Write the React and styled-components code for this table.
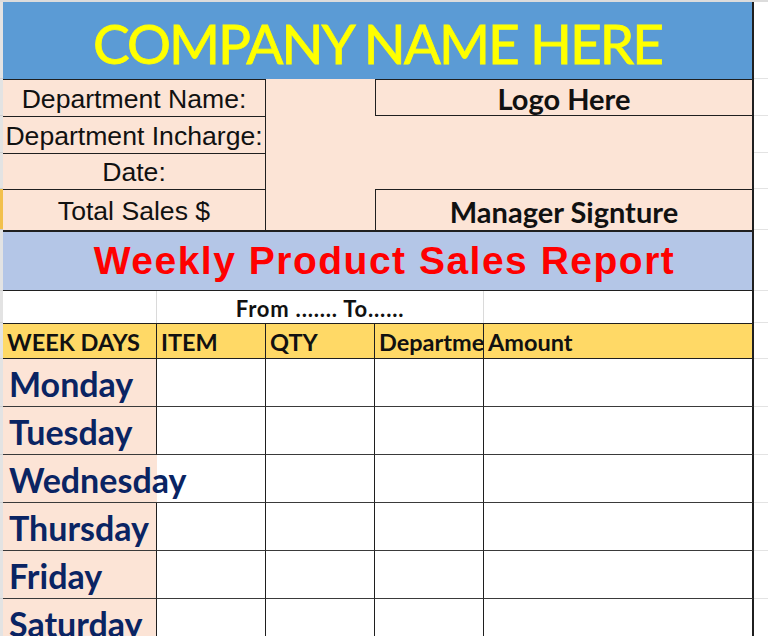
import React from "react";
import styled, { createGlobalStyle } from "styled-components";

const GlobalStyle = createGlobalStyle`
  html, body {
    margin: 0;
    padding: 0;
    background: #ffffff;
  }
  body {
    width: 768px;
    height: 636px;
    overflow: hidden;
  }
`;

const INK = "#1f1f1f";
const PINK = "#fce4d6";
const calibri = `Lato, "Open Sans", sans-serif`;
const arial = `"Liberation Sans", Arial, sans-serif`;

const Sheet = styled.div`
  display: grid;
  grid-template-columns: 3px 154px 109px 109px 109px 270px 14px;
  grid-template-rows: 2px 77px 37px 37px 36px 41px 61px 32px 36px repeat(6, 48px);
  width: 768px;
  height: 636px;
  overflow: hidden;
  background: #ffffff;
`;

const ColumnStrip = styled.div`
  grid-column: 1 / -1;
  grid-row: 1;
  background: #dcdcdc;
`;

const RowHead = styled.div`
  grid-column: 1;
  grid-row: ${(p) => p.$row};
  background: ${(p) => (p.$active ? "#f2c04c" : "#e3e3e3")};
  border-bottom: 1px solid #cfcfcf;
`;

const Gutter = styled.div`
  grid-column: 7;
  grid-row: ${(p) => p.$row};
  border-bottom: 1px solid #e3e3e3;
`;

const TitleBar = styled.div`
  grid-column: 2 / 7;
  grid-row: 2;
  display: flex;
  align-items: center;
  justify-content: center;
  background: #5b9bd5;
  border-right: 2px solid ${INK};
  color: #ffff00;
  font-family: ${calibri};
  font-size: 55px;
  letter-spacing: -2px;
  -webkit-text-stroke: 0.8px #ffff00;
  padding-top: 4px;
`;

const LabelCell = styled.div`
  grid-column: 2 / 4;
  grid-row: ${(p) => p.$row};
  display: flex;
  align-items: center;
  justify-content: center;
  background: ${PINK};
  border-top: 1px solid ${INK};
  border-right: 1px solid ${INK};
  font-family: ${arial};
  font-size: 26.6px;
  color: #111;
  white-space: nowrap;
  padding-top: 2px;
`;

const BlankPink = styled.div`
  grid-column: ${(p) => p.$col};
  grid-row: ${(p) => p.$row};
  background: ${PINK};
  border-right: ${(p) => (p.$edge ? `2px solid ${INK}` : "none")};
`;

const BoxCell = styled.div`
  grid-column: 5 / 7;
  grid-row: ${(p) => p.$row};
  display: flex;
  align-items: center;
  justify-content: center;
  background: ${PINK};
  border-top: 1px solid ${INK};
  border-left: 1px solid ${INK};
  border-right: 2px solid ${INK};
  border-bottom: ${(p) => (p.$closed ? `1px solid ${INK}` : "none")};
  font-family: ${calibri};
  font-weight: 700;
  font-size: 29px;
  color: #111;
  padding-top: 2px;
`;

const Band = styled.div`
  grid-column: 2 / 7;
  grid-row: 7;
  display: flex;
  align-items: center;
  justify-content: center;
  padding-left: 14px;
  background: #b4c6e7;
  border-top: 2px solid ${INK};
  border-bottom: 1px solid ${INK};
  border-right: 2px solid ${INK};
  color: #ff0000;
  font-family: ${arial};
  font-weight: 700;
  font-size: 39px;
  letter-spacing: 1.5px;
`;

const FromCell = styled.div`
  grid-column: ${(p) => p.$col};
  grid-row: 8;
  display: flex;
  align-items: center;
  justify-content: center;
  border-right: ${(p) => (p.$edge ? `2px solid ${INK}` : "1px solid #dadada")};
  font-family: ${calibri};
  font-weight: 700;
  font-size: 22px;
  letter-spacing: 0.8px;
  color: #111;
  padding-top: 2px;
`;

const HeadCell = styled.div`
  grid-column: ${(p) => p.$col};
  grid-row: 9;
  display: flex;
  align-items: center;
  padding: 2px 0 0 4px;
  overflow: hidden;
  white-space: nowrap;
  background: #ffd966;
  border-top: 1px solid ${INK};
  border-bottom: 1px solid ${INK};
  border-right: ${(p) => (p.$edge ? 2 : 1)}px solid ${INK};
  font-family: ${calibri};
  font-weight: 700;
  font-size: 23.5px;
  color: #111;
`;

const DayCell = styled.div`
  grid-column: 2;
  grid-row: ${(p) => p.$row};
  position: relative;
  z-index: 1;
  display: flex;
  align-items: center;
  padding: 2px 0 0 6px;
  white-space: nowrap;
  background: ${PINK};
  border-bottom: 1px solid #3a3a3a;
  border-right: ${(p) => (p.$spill ? "none" : `1px solid ${INK}`)};
  font-family: ${calibri};
  font-weight: 700;
  font-size: 34px;
  color: #0a2463;
`;

const EntryCell = styled.div`
  grid-column: ${(p) => p.$col};
  grid-row: ${(p) => p.$row};
  border-bottom: 1px solid #3a3a3a;
  border-right: ${(p) => (p.$edge ? 2 : 1)}px solid ${INK};
`;

const labels = [
  "Department Name:",
  "Department Incharge:",
  "Date:",
  "Total Sales $",
];

const headings = ["WEEK DAYS", "ITEM", "QTY", "Department", "Amount"];

const days = [
  "Monday",
  "Tuesday",
  "Wednesday",
  "Thursday",
  "Friday",
  "Saturday",
];

export default function App() {
  const rows = Array.from({ length: 14 }, (_, i) => i + 2);

  return (
    <>
      <GlobalStyle />
      <Sheet>
        <ColumnStrip />
        {rows.map((r) => (
          <RowHead key={`h${r}`} $row={r} $active={r === 6} />
        ))}
        {rows.map((r) => (
          <Gutter key={`g${r}`} $row={r} />
        ))}

        <TitleBar>COMPANY NAME HERE</TitleBar>

        {labels.map((text, i) => (
          <LabelCell key={text} $row={i + 3}>
            {text}
          </LabelCell>
        ))}
        <BlankPink $col={4} $row="3 / 7" />

        <BoxCell $row={3} $closed>
          Logo Here
        </BoxCell>
        <BlankPink $col="5 / 7" $row="4 / 6" $edge />
        <BoxCell $row={6}>Manager Signture</BoxCell>

        <Band>Weekly Product Sales Report</Band>

        <FromCell $col={2} />
        <FromCell $col="3 / 6">From ....... To......</FromCell>
        <FromCell $col={6} $edge />

        {headings.map((text, i) => (
          <HeadCell key={text} $col={i + 2} $edge={i === 4}>
            {text}
          </HeadCell>
        ))}

        {days.map((day, d) => (
          <React.Fragment key={day}>
            <DayCell $row={d + 10} $spill={day === "Wednesday"}>
              {day}
            </DayCell>
            {[3, 4, 5, 6].map((c) => (
              <EntryCell key={c} $col={c} $row={d + 10} $edge={c === 6} />
            ))}
          </React.Fragment>
        ))}
      </Sheet>
    </>
  );
}
